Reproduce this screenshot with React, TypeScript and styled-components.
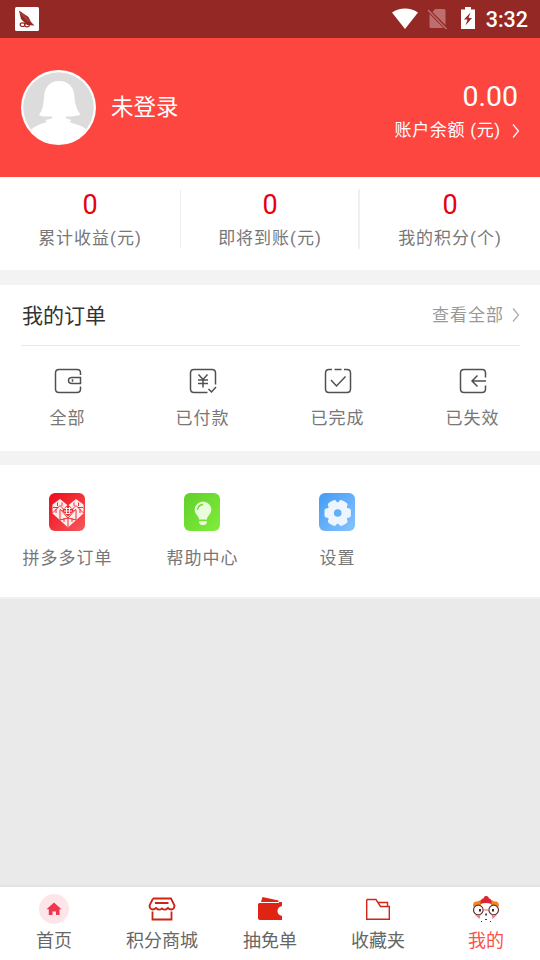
import React from 'react';
import styled, { createGlobalStyle } from 'styled-components';

const GlobalStyle = createGlobalStyle`
  * { box-sizing: border-box; }
  body { margin: 0; background: #eaeaea; }
  svg { display: block; flex: none; }
`;

const Screen = styled.div`
  display: flex;
  flex-direction: column;
  width: 540px;
  height: 960px;
  background: #eaeaea;
  font-family: Roboto, "Noto Sans CJK SC", sans-serif;
  color: #777;
  overflow: hidden;
  white-space: nowrap;
`;

const StatusBar = styled.div`
  display: flex;
  align-items: center;
  justify-content: space-between;
  height: 38px;
  padding: 0 12px 0 15px;
  background: #932824;
  color: #fff;
`;

const StatusIcons = styled.div`
  display: flex;
  align-items: center;
`;

const Clock = styled.span`
  margin-left: 11px;
  padding-top: 2px;
  font-size: 21.5px;
  font-weight: 500;
  line-height: 24px;
`;

const Header = styled.header`
  display: flex;
  align-items: center;
  height: 139px;
  padding: 0 21px;
  background: #fd4640;
  color: #fff;
`;

const UserName = styled.div`
  flex: 1;
  margin: -2px 0 0 15px;
  font-size: 22.5px;
  line-height: 30px;
`;

const Balance = styled.div`
  display: flex;
  flex-direction: column;
  align-items: flex-end;
  margin-top: 11px;
`;

const Amount = styled.div`
  margin-right: 1px;
  font-size: 28.5px;
  line-height: 36px;
`;

const BalanceLabel = styled.div`
  display: flex;
  align-items: center;
  gap: 11px;
  height: 32px;
  margin-right: -1px;
  font-size: 17px;
  line-height: 24px;
  letter-spacing: 0.7px;
`;

const BalanceText = styled.span`
  margin-top: -2px;
`;

const Stats = styled.section`
  display: grid;
  grid-template-columns: repeat(3, 1fr);
  height: 93px;
  padding-top: 12px;
  background: #fff;
`;

const Stat = styled.div`
  height: 60px;
  text-align: center;

  &:nth-child(2) {
    background:
      linear-gradient(#ededed, #ededed) left center / 1px 58px no-repeat,
      linear-gradient(#f0f0f0, #f0f0f0) right center / 2px 60px no-repeat;
  }
`;

const StatValue = styled.div`
  padding-top: 1px;
  font-size: 27px;
  line-height: 30px;
  color: #e60012;
`;

const StatLabel = styled.div`
  margin-top: 5px;
  font-size: 17px;
  line-height: 26px;
  letter-spacing: 1px;
`;

const Panel = styled.section<{ $height: number; $gap: number }>`
  height: ${p => p.$height + p.$gap}px;
  border-top: ${p => p.$gap}px solid #f3f3f3;
  background: #fff;
`;

const PanelHead = styled.div`
  display: flex;
  align-items: center;
  justify-content: space-between;
  height: 61px;
  margin: 0 20px 0 21px;
  border-bottom: 1px solid #e9e9e9;
`;

const PanelTitle = styled.h2`
  margin: -2px 0 0 1px;
  font-size: 21px;
  font-weight: 400;
  color: #333;
`;

const MoreLink = styled.div`
  display: flex;
  align-items: center;
  gap: 8px;
  font-size: 17px;
  line-height: 24px;
  letter-spacing: 1px;
  color: #999;
`;

const Grid = styled.div`
  display: grid;
  grid-template-columns: repeat(4, 1fr);
`;

const Entry = styled.div<{ $top: number; $gap: number }>`
  display: flex;
  flex-direction: column;
  align-items: center;
  gap: ${p => p.$gap}px;
  padding-top: ${p => p.$top}px;
  font-size: 17px;
  line-height: 26px;
  letter-spacing: 1px;
`;

const Spacer = styled.div`
  flex: 1;
  border-top: 2px solid #f0f0f0;
  border-bottom: 2px solid #e4e4e4;
`;

const TabBar = styled.nav`
  display: grid;
  grid-template-columns: repeat(5, 1fr);
  height: 73px;
  background: #fff;
`;

const Tab = styled.div<{ $active?: boolean }>`
  display: flex;
  flex-direction: column;
  align-items: center;
  gap: 4px;
  padding-top: 7px;
  font-size: 18px;
  line-height: 26px;
  color: ${p => (p.$active ? '#f8524b' : '#666')};
`;

const Chevron = ({ color }: { color: string }) => (
  <svg width="8" height="16" viewBox="0 0 8 16" fill="none" stroke={color} strokeWidth="1.2">
    <path d="M1 1.5 6.5 8 1 14.5" />
  </svg>
);

const AppBadge = () => (
  <svg width="24" height="24" viewBox="0 0 24 24">
    <rect width="24" height="24" rx="1.5" fill="#fff" />
    <path d="M4 3.5 13.5 10 16 15 19.5 18.5 12 18 6 12Z" fill="#932824" />
    <path d="m5 6 8 8m-6-8 8 9" stroke="#b9605c" strokeWidth=".6" />
    <g fill="none" stroke="#932824" strokeWidth="1.2">
      <ellipse cx="7.5" cy="17.7" rx="2.3" ry="1.8" />
      <ellipse cx="12" cy="18" rx="2.4" ry="1.8" />
    </g>
  </svg>
);

const WifiIcon = () => (
  <svg width="26" height="22" viewBox="0 0 26 22">
    <path d="M0 4.5C7.5-1 18.5-1 26 4.5L13 21Z" fill="#fff" />
  </svg>
);

const NoSimIcon = () => (
  <svg width="21" height="22" viewBox="0 0 21 22">
    <path d="M8 1h9q1.500 0 1.500 1.500V17L5.500 4ZM2.500 6 16.500 20H4q-1.500 0-1.500-1.500Z" fill="#bc6f6c" />
    <path d="m1 2 18.500 19" stroke="#bc6f6c" strokeWidth="1.5" />
  </svg>
);

const BatteryIcon = () => (
  <svg width="14" height="22" viewBox="0 0 14 22">
    <path d="M4 0h6v2.500h4V22H0V2.500h4Z" fill="#fff" />
    <path d="M9.500 5.500 3 12.500h3.500L4.500 18.500 11 11H7.500Z" fill="#932824" />
  </svg>
);

const SignalGroup = styled.div`
  display: flex;
  align-items: center;
  gap: 9px;
`;

const BatterySlot = styled.div`
  margin: -2px 0 0 4px;
`;

const Avatar = () => (
  <svg width="75" height="75" viewBox="0 0 75 75">
    <defs>
      <clipPath id="avatar-disc"><circle cx="37.5" cy="37.5" r="36.5" /></clipPath>
    </defs>
    <circle cx="37.5" cy="37.5" r="37.5" fill="#fff" />
    <circle cx="37.5" cy="37.5" r="35.3" fill="#dcdcdc" />
    <path
      clipPath="url(#avatar-disc)"
      fill="#fff"
      d="M38 11C28 11 23.500 18 23 27C22.500 35 21.500 40 18 45Q21 47 31 46.500V48.500L24.500 50L26 52C19 54 13 56 9 61L8 75H68L65 59C60 55 53 54 48.500 52L50.500 50L45 48.500V46.500Q56 46.500 59.500 44.500C55.500 39 54 34 53.500 27C53 17 47.500 11 38 11Z"
    />
  </svg>
);

const LineIcon = ({ children }: { children: React.ReactNode }) => (
  <svg width="28" height="26" viewBox="0 0 28 26" fill="none" stroke="#505050" strokeWidth="1.5">
    {children}
  </svg>
);

const WalletIcon = () => (
  <LineIcon>
    <path d="M26.500 7V5Q26.500 1.500 23 1.500H5Q1.500 1.500 1.500 5V21Q1.500 24.500 5 24.500H23Q26.500 24.500 26.500 21V18.500" />
    <path d="M26.500 9.500H18Q14.500 9.500 14.500 12.500T18 15.500H26.500ZM18.500 11.200V13.800" />
  </LineIcon>
);

const PaidIcon = () => (
  <LineIcon>
    <path d="M18.500 24.500H5Q1.500 24.500 1.500 21V5Q1.500 1.500 5 1.500H23Q26.500 1.500 26.500 5V16.500" />
    <path d="m9.500 6.500 4.500 5 4.500-5M14 11.500V19.500M9 12H19M9 15.500H19M19.500 21 22.500 24 27 19" />
  </LineIcon>
);

const DoneIcon = () => (
  <LineIcon>
    <path d="M8 1.500H5Q1.500 1.500 1.500 5V21Q1.500 24.500 5 24.500H23Q26.500 24.500 26.500 21V5Q26.500 1.500 23 1.500H20M10.500 1.500H17.500M7 12 12.500 18 21.500 8.500" />
  </LineIcon>
);

const InvalidIcon = () => (
  <LineIcon>
    <path d="M26.500 9.500V5Q26.500 1.500 23 1.500H5Q1.500 1.500 1.500 5V21Q1.500 24.500 5 24.500H23Q26.500 24.500 26.500 21V17.500M27 13H13M18.500 7.500 13 13 18.500 18.500" />
  </LineIcon>
);

const TileSlot = styled.div`
  margin-left: -2px;
`;

const HeartTile = () => (
  <TileSlot>
    <svg width="36" height="38" viewBox="0 0 36 38">
      <defs>
        <linearGradient id="tile-red" x1="0" y1="0" x2="1" y2="1">
          <stop offset="0" stopColor="#ee0a18" /><stop offset="1" stopColor="#f6585c" />
        </linearGradient>
      </defs>
      <rect width="36" height="38" rx="6" fill="url(#tile-red)" />
      <path d="M11 6 19 12.500 27 6 34.500 11.500V20.500L19 34.500 3.500 20.500V11.500Z" fill="#ffeceb" />
      <g fill="none" stroke="#ee2c36" strokeWidth="1">
        <path d="M11 16 19 25 27 16M3.500 20 11 12.500 19 20.500 27 12.500 34.500 20M11 17V27M27 17V27M19 25V34M11 27 19 25 27 27" />
        <path d="M8.500 9.500V13M13 9.500V13M25 9.500V13M29.500 9.500V13M7 16V20M31 16V20M15 25V29M23 25V29M4 14.500H9M29 14.500H34" />
      </g>
      <path d="m19 11.500 6 6L19 23.500 13 17.500Z" fill="#ee2934" />
      <path d="M15.500 15.500H22.500M15 18H23M17.500 14V21M20.500 14V21M16.500 20.500H21.500" stroke="#fff" strokeWidth=".9" />
    </svg>
  </TileSlot>
);

const BulbTile = () => (
  <TileSlot>
    <svg width="36" height="38" viewBox="0 0 36 38">
      <defs>
        <linearGradient id="tile-green" x1="0" y1="0" x2="1" y2="1">
          <stop offset="0" stopColor="#61cf29" /><stop offset="1" stopColor="#7fee3c" />
        </linearGradient>
      </defs>
      <rect width="36" height="38" rx="6" fill="url(#tile-green)" />
      <path d="M19 8.500A8.300 8.300 0 0 0 10.700 17C10.700 21.500 15 22.500 15 26.500H23C23 22.500 27.300 21.500 27.300 17A8.300 8.300 0 0 0 19 8.500ZM15.200 28H22.800V30Q22 32 20 32H18Q16 32 15.200 30Z" fill="#e9fddd" />
      <path d="M13.500 17Q14 12 19 11.500" fill="none" stroke="#6fda30" strokeWidth="1.3" />
    </svg>
  </TileSlot>
);

const GearTile = () => (
  <TileSlot>
    <svg width="36" height="38" viewBox="0 0 36 38">
      <defs>
        <linearGradient id="tile-blue" x1="0" y1="0" x2="1" y2="1">
          <stop offset="0" stopColor="#439cf5" /><stop offset="1" stopColor="#86c3ff" />
        </linearGradient>
      </defs>
      <rect width="36" height="38" rx="6" fill="url(#tile-blue)" />
      <g fill="#edf6ff">
        <circle cx="18.7" cy="20" r="10.8" />
        {[0, 60, 120].map(angle => (
          <rect key={angle} x="5.5" y="15.3" width="26.4" height="9.4" rx="2.6" transform={`rotate(${angle} 18.7 20)`} />
        ))}
      </g>
      <circle cx="18.7" cy="20" r="3.8" fill="#62aefa" />
    </svg>
  </TileSlot>
);

const HomeIcon = () => (
  <svg width="30" height="30" viewBox="0 0 30 30">
    <circle cx="15" cy="15" r="15" fill="#fde5e9" />
    <path d="M15 8.500 22.500 15.300H20.500V21H17V17.500H13.500V21H9.800V15.300H7.500Z" fill="#ee3851" />
  </svg>
);

const ShopIcon = () => (
  <svg width="30" height="30" viewBox="0 0 30 30" fill="none" stroke="#cc2415" strokeWidth="1.8">
    <path d="M6 4.500H24L27.500 11.500Q27.500 15 24.500 15.500 22 15.500 21 14 18 17 15 14.500 12 17 9 14 7.500 15.500 5.500 15.500 2.500 15 2.500 11.500L6 4.500M8 9H21.500M5.500 17.500V25.500H24.500V17.500" />
  </svg>
);

const TicketIcon = () => (
  <svg width="30" height="30" viewBox="0 0 30 30" fill="#df2414">
    <path d="M7.500 3 23.500 6.500V8H6Z" />
    <path d="M4.500 9H24V8H27V12Q22.500 13 22.500 17T27 22V26H5Q3 26 3 24V10.500Q3 9 4.500 9Z" />
  </svg>
);

const FolderIcon = () => (
  <svg width="30" height="30" viewBox="0 0 30 30" fill="none" stroke="#d32517" strokeWidth="1.4">
    <path d="M3.700 5.500V25.300H26.300V12.500H17.500L13 5.500H3.700M15 8.500H24.500V12.500" />
  </svg>
);

const MascotIcon = () => (
  <svg width="30" height="30" viewBox="0 0 30 30">
    <path d="M2 12Q2 7 6 7.500L10 6V11L3 13ZM28 12Q28 7 24 7.500L20 6V11L27 13Z" fill="#f68422" />
    <path d="M9.500 10Q9 4.500 12.500 4.500 13 1.500 15 2 17.500 1.500 18 4.500 21 4.500 20.500 10 15 8 9.500 10Z" fill="#df2630" />
    <g fill="#fff" stroke="#65302e" strokeWidth="1.2">
      <circle cx="7.3" cy="16" r="4.8" /><circle cx="22.7" cy="16" r="4.8" />
    </g>
    <path d="M3.500 20.500Q6 22 9.500 20.500L8.500 25ZM26.500 20.500Q24 22 20.500 20.500L21.500 25Z" fill="#f27c87" />
    <path d="M12.300 16H17.700" stroke="#e06a63" />
    <path d="M8 15h2v2.500h-2ZM21 15h2v2.500h-2ZM14.200 19.500h1.700v2h-1.700Z" fill="#3f2630" />
    <path d="M10 27 11 28M14 25.500H16M19 28 20 27" stroke="#65302e" />
  </svg>
);

const stats = ['累计收益(元)', '即将到账(元)', '我的积分(个)'];

const orders = [
  { label: '全部', Icon: WalletIcon },
  { label: '已付款', Icon: PaidIcon },
  { label: '已完成', Icon: DoneIcon },
  { label: '已失效', Icon: InvalidIcon },
];

const tools = [
  { label: '拼多多订单', Icon: HeartTile },
  { label: '帮助中心', Icon: BulbTile },
  { label: '设置', Icon: GearTile },
];

const tabs = [
  { label: '首页', Icon: HomeIcon },
  { label: '积分商城', Icon: ShopIcon },
  { label: '抽免单', Icon: TicketIcon },
  { label: '收藏夹', Icon: FolderIcon },
  { label: '我的', Icon: MascotIcon, active: true },
];

export default function App() {
  return (
    <>
      <GlobalStyle />
      <Screen>
        <StatusBar>
          <AppBadge />
          <StatusIcons>
            <SignalGroup>
              <WifiIcon />
              <NoSimIcon />
              <BatterySlot><BatteryIcon /></BatterySlot>
            </SignalGroup>
            <Clock>3:32</Clock>
          </StatusIcons>
        </StatusBar>
        <Header>
          <Avatar />
          <UserName>未登录</UserName>
          <Balance>
            <Amount>0.00</Amount>
            <BalanceLabel><BalanceText>账户余额 (元)</BalanceText><Chevron color="#fff" /></BalanceLabel>
          </Balance>
        </Header>
        <Stats>
          {stats.map(label => (
            <Stat key={label}>
              <StatValue>0</StatValue>
              <StatLabel>{label}</StatLabel>
            </Stat>
          ))}
        </Stats>
        <Panel $height={166} $gap={15}>
          <PanelHead>
            <PanelTitle>我的订单</PanelTitle>
            <MoreLink>查看全部<Chevron color="#aaa" /></MoreLink>
          </PanelHead>
          <Grid>
            {orders.map(({ label, Icon }) => (
              <Entry key={label} $top={22} $gap={11}><Icon />{label}</Entry>
            ))}
          </Grid>
        </Panel>
        <Panel $height={132} $gap={14}>
          <Grid>
            {tools.map(({ label, Icon }) => (
              <Entry key={label} $top={28} $gap={14}><Icon />{label}</Entry>
            ))}
          </Grid>
        </Panel>
        <Spacer />
        <TabBar>
          {tabs.map(({ label, Icon, active }) => (
            <Tab key={label} $active={active}><Icon />{label}</Tab>
          ))}
        </TabBar>
      </Screen>
    </>
  );
}
